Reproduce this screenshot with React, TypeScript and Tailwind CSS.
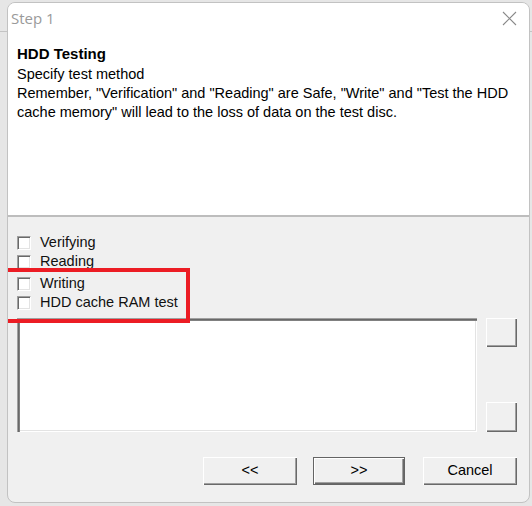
import React from "react";

const font = { fontFamily: '"Liberation Sans", Arial, sans-serif' };

function Check({ label }: { label: string }) {
  return (
    <div className="flex items-center h-[19px]">
      <div className="w-[14px] h-[14px] bg-white border-t border-l border-[#a0a0a0] border-r-white border-b-white border-r border-b shadow-[inset_1px_1px_0_#696969,inset_-1px_-1px_0_#e3e3e3]" />
      <span className="ml-[9px] text-[14.5px] text-[#111]">{label}</span>
    </div>
  );
}

function RaisedButton({
  children,
  className,
  isDefault,
}: {
  children?: React.ReactNode;
  className: string;
  isDefault?: boolean;
}) {
  return (
    <div
      className={
        "bg-[#f0f0f0] flex items-center justify-center text-[14.5px] text-black " +
        (isDefault
          ? "border border-[#646464] shadow-[inset_1px_1px_0_#ffffff,inset_-1px_-1px_0_#696969,inset_-2px_-2px_0_#a0a0a0] "
          : "shadow-[inset_1px_1px_0_#ffffff,inset_-1px_-1px_0_#696969,inset_-2px_-2px_0_#a0a0a0] ") +
        className
      }
    >
      {children}
    </div>
  );
}

export default function App() {
  return (
    <div className="w-[532px] h-[506px] bg-[#e6e6e6] relative overflow-hidden pl-[7px] pt-[2px]" style={font}>
      <div className="absolute left-0 right-0 top-[31px] h-[1px] bg-[#c4c4c4]" />
      <div className="relative w-[523px] h-[501px] rounded-[8px] border border-[#c2c2c2] bg-[#f0f0f0] flex flex-col overflow-hidden">
        {/* title bar */}
        <div className="h-[29px] bg-white flex items-center justify-between pl-[3px] pr-[12px] shrink-0">
          <span className="text-[15px] text-[#9a9a9a] mt-[2px]" style={{ fontFamily: '"Open Sans", "Liberation Sans", sans-serif' }}>
            Step 1
          </span>
          <svg width="15" height="15" viewBox="0 0 15 15" className="mt-[2px]">
            <path d="M1 1 L14 14 M14 1 L1 14" stroke="#8a8a8a" strokeWidth="1.1" fill="none" />
          </svg>
        </div>
        {/* header */}
        <div className="h-[185px] bg-white border-b-2 border-[#bdbdbd] px-[9px] pt-[12px] shrink-0 text-black">
          <div className="text-[15px] font-bold leading-[19px]">HDD Testing</div>
          <div className="text-[14.5px] leading-[19px] mt-[2px]">Specify test method</div>
          <div className="text-[14.5px] leading-[19px]">
            Remember, "Verification" and "Reading" are Safe, "Write" and "Test the HDD cache memory" will lead to the
            loss of data on the test disc.
          </div>
        </div>
        {/* body */}
        <div className="flex-1 flex flex-col px-[9px]">
          <div className="relative mt-[16px] flex flex-col">
            <Check label="Verifying" />
            <Check label="Reading" />
            <div className="h-[3px]" />
            <Check label="Writing" />
            <Check label="HDD cache RAM test" />
            <div className="absolute left-[-13px] top-[35px] w-[186px] h-[55px] border-[4px] border-[#ec1c24]" />
          </div>
          <div className="flex mt-[6px]">
            <div className="w-[460px] h-[114px] bg-white shadow-[inset_1px_1px_0_#a0a0a0,inset_2px_2px_0_#696969,inset_3px_3px_0_#808080,inset_-1px_-1px_0_#ffffff,inset_-2px_-2px_0_#e3e3e3]" />
            <div className="ml-[9px] flex flex-col justify-between h-[114px]">
              <RaisedButton className="w-[31px] h-[29px]" />
              <RaisedButton className="w-[31px] h-[30px]" />
            </div>
          </div>
          <div className="flex justify-end mt-[25px] pr-[3px]">
            <RaisedButton className="w-[94px] h-[28px]">&lt;&lt;</RaisedButton>
            <RaisedButton className="w-[92px] h-[28px] ml-[16px]" isDefault>
              &gt;&gt;
            </RaisedButton>
            <RaisedButton className="w-[94px] h-[28px] ml-[18px]">Cancel</RaisedButton>
          </div>
        </div>
      </div>
    </div>
  );
}
